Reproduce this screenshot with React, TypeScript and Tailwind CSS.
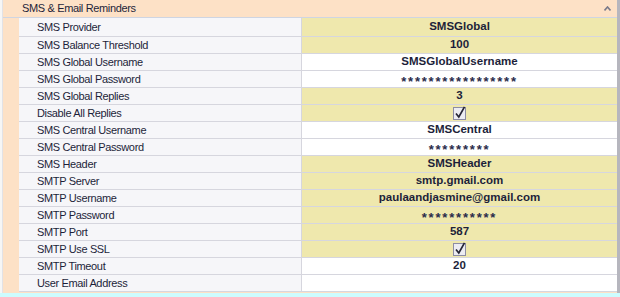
import React from "react";

type Row = {
  label: string;
  value?: string;
  check?: boolean;
  masked?: boolean;
  hl: boolean;
};

const rows: Row[] = [
  { label: "SMS Provider", value: "SMSGlobal", hl: true },
  { label: "SMS Balance Threshold", value: "100", hl: true },
  { label: "SMS Global Username", value: "SMSGlobalUsername", hl: false },
  { label: "SMS Global Password", value: "*****************", masked: true, hl: false },
  { label: "SMS Global Replies", value: "3", hl: true },
  { label: "Disable All Replies", check: true, hl: true },
  { label: "SMS Central Username", value: "SMSCentral", hl: false },
  { label: "SMS Central Password", value: "*********", masked: true, hl: false },
  { label: "SMS Header", value: "SMSHeader", hl: true },
  { label: "SMTP Server", value: "smtp.gmail.com", hl: true },
  { label: "SMTP Username", value: "paulaandjasmine@gmail.com", hl: true },
  { label: "SMTP Password", value: "***********", masked: true, hl: true },
  { label: "SMTP Port", value: "587", hl: true },
  { label: "SMTP Use SSL", check: true, hl: true },
  { label: "SMTP Timeout", value: "20", hl: false },
  { label: "User Email Address", value: "", hl: false },
];

function CheckBox() {
  return (
    <svg width="14" height="14" viewBox="0 0 14 14">
      <rect x="0.5" y="1.5" width="12" height="12" fill="#ececf2" stroke="#8c8ca4" />
      <path d="M3 7.5 L5.8 11 L11.5 0.8" fill="none" stroke="#262636" strokeWidth="1.7" />
    </svg>
  );
}

export default function App() {
  return (
    <div className="w-[620px] h-[297px] bg-[#f6f6f6] flex flex-col font-['Liberation_Sans',sans-serif] text-[11px] text-[#1d1f3a] overflow-hidden">
      <div className="flex flex-1 min-h-0">
        <div className="w-[3px] border-r border-[#e2e2e6]" />
        <div className="flex-1 bg-[#fde1c6] flex flex-col">
          <div className="h-[18px] border-b border-[#cfd5e2] flex items-center justify-between pl-[19px] pr-[6px]">
            <span className="tracking-[-0.35px]">SMS &amp; Email Reminders</span>
            <svg width="7" height="5" viewBox="0 0 7 5">
              <path d="M0.5 4.5 L3.5 1 L6.5 4.5" fill="none" stroke="#7a7a8a" strokeWidth="1.6" />
            </svg>
          </div>
          <div className="flex">
            <div className="w-[16px]" />
            <div className="flex-1 flex flex-col">
              {rows.map((r, i) => (
                <div
                  key={r.label}
                  className={`flex border-b border-[#d6d6de] ${i === 0 ? "h-[19px]" : "h-[17px]"}`}
                >
                  <div className="w-[283px] bg-[#f6f6f9] border-r border-[#d6d6de] flex items-center pl-[18px] tracking-[-0.35px]">
                    {r.label}
                  </div>
                  <div
                    className={`flex-1 flex items-center justify-center font-bold text-[11.5px] ${
                      r.hl ? "bg-[#efe8ad]" : "bg-white"
                    }`}
                  >
                    {r.check ? (
                      <CheckBox />
                    ) : r.masked ? (
                      <span className="text-[13px] tracking-[1.8px] translate-y-[3px] text-[#2a2c4a]">{r.value}</span>
                    ) : (
                      r.value
                    )}
                  </div>
                </div>
              ))}
            </div>
          </div>
        </div>
        <div className="w-[3px] bg-[#b6b6be]" />
      </div>
      <div className="h-[4px] bg-[#cdfcfe]" />
    </div>
  );
}
